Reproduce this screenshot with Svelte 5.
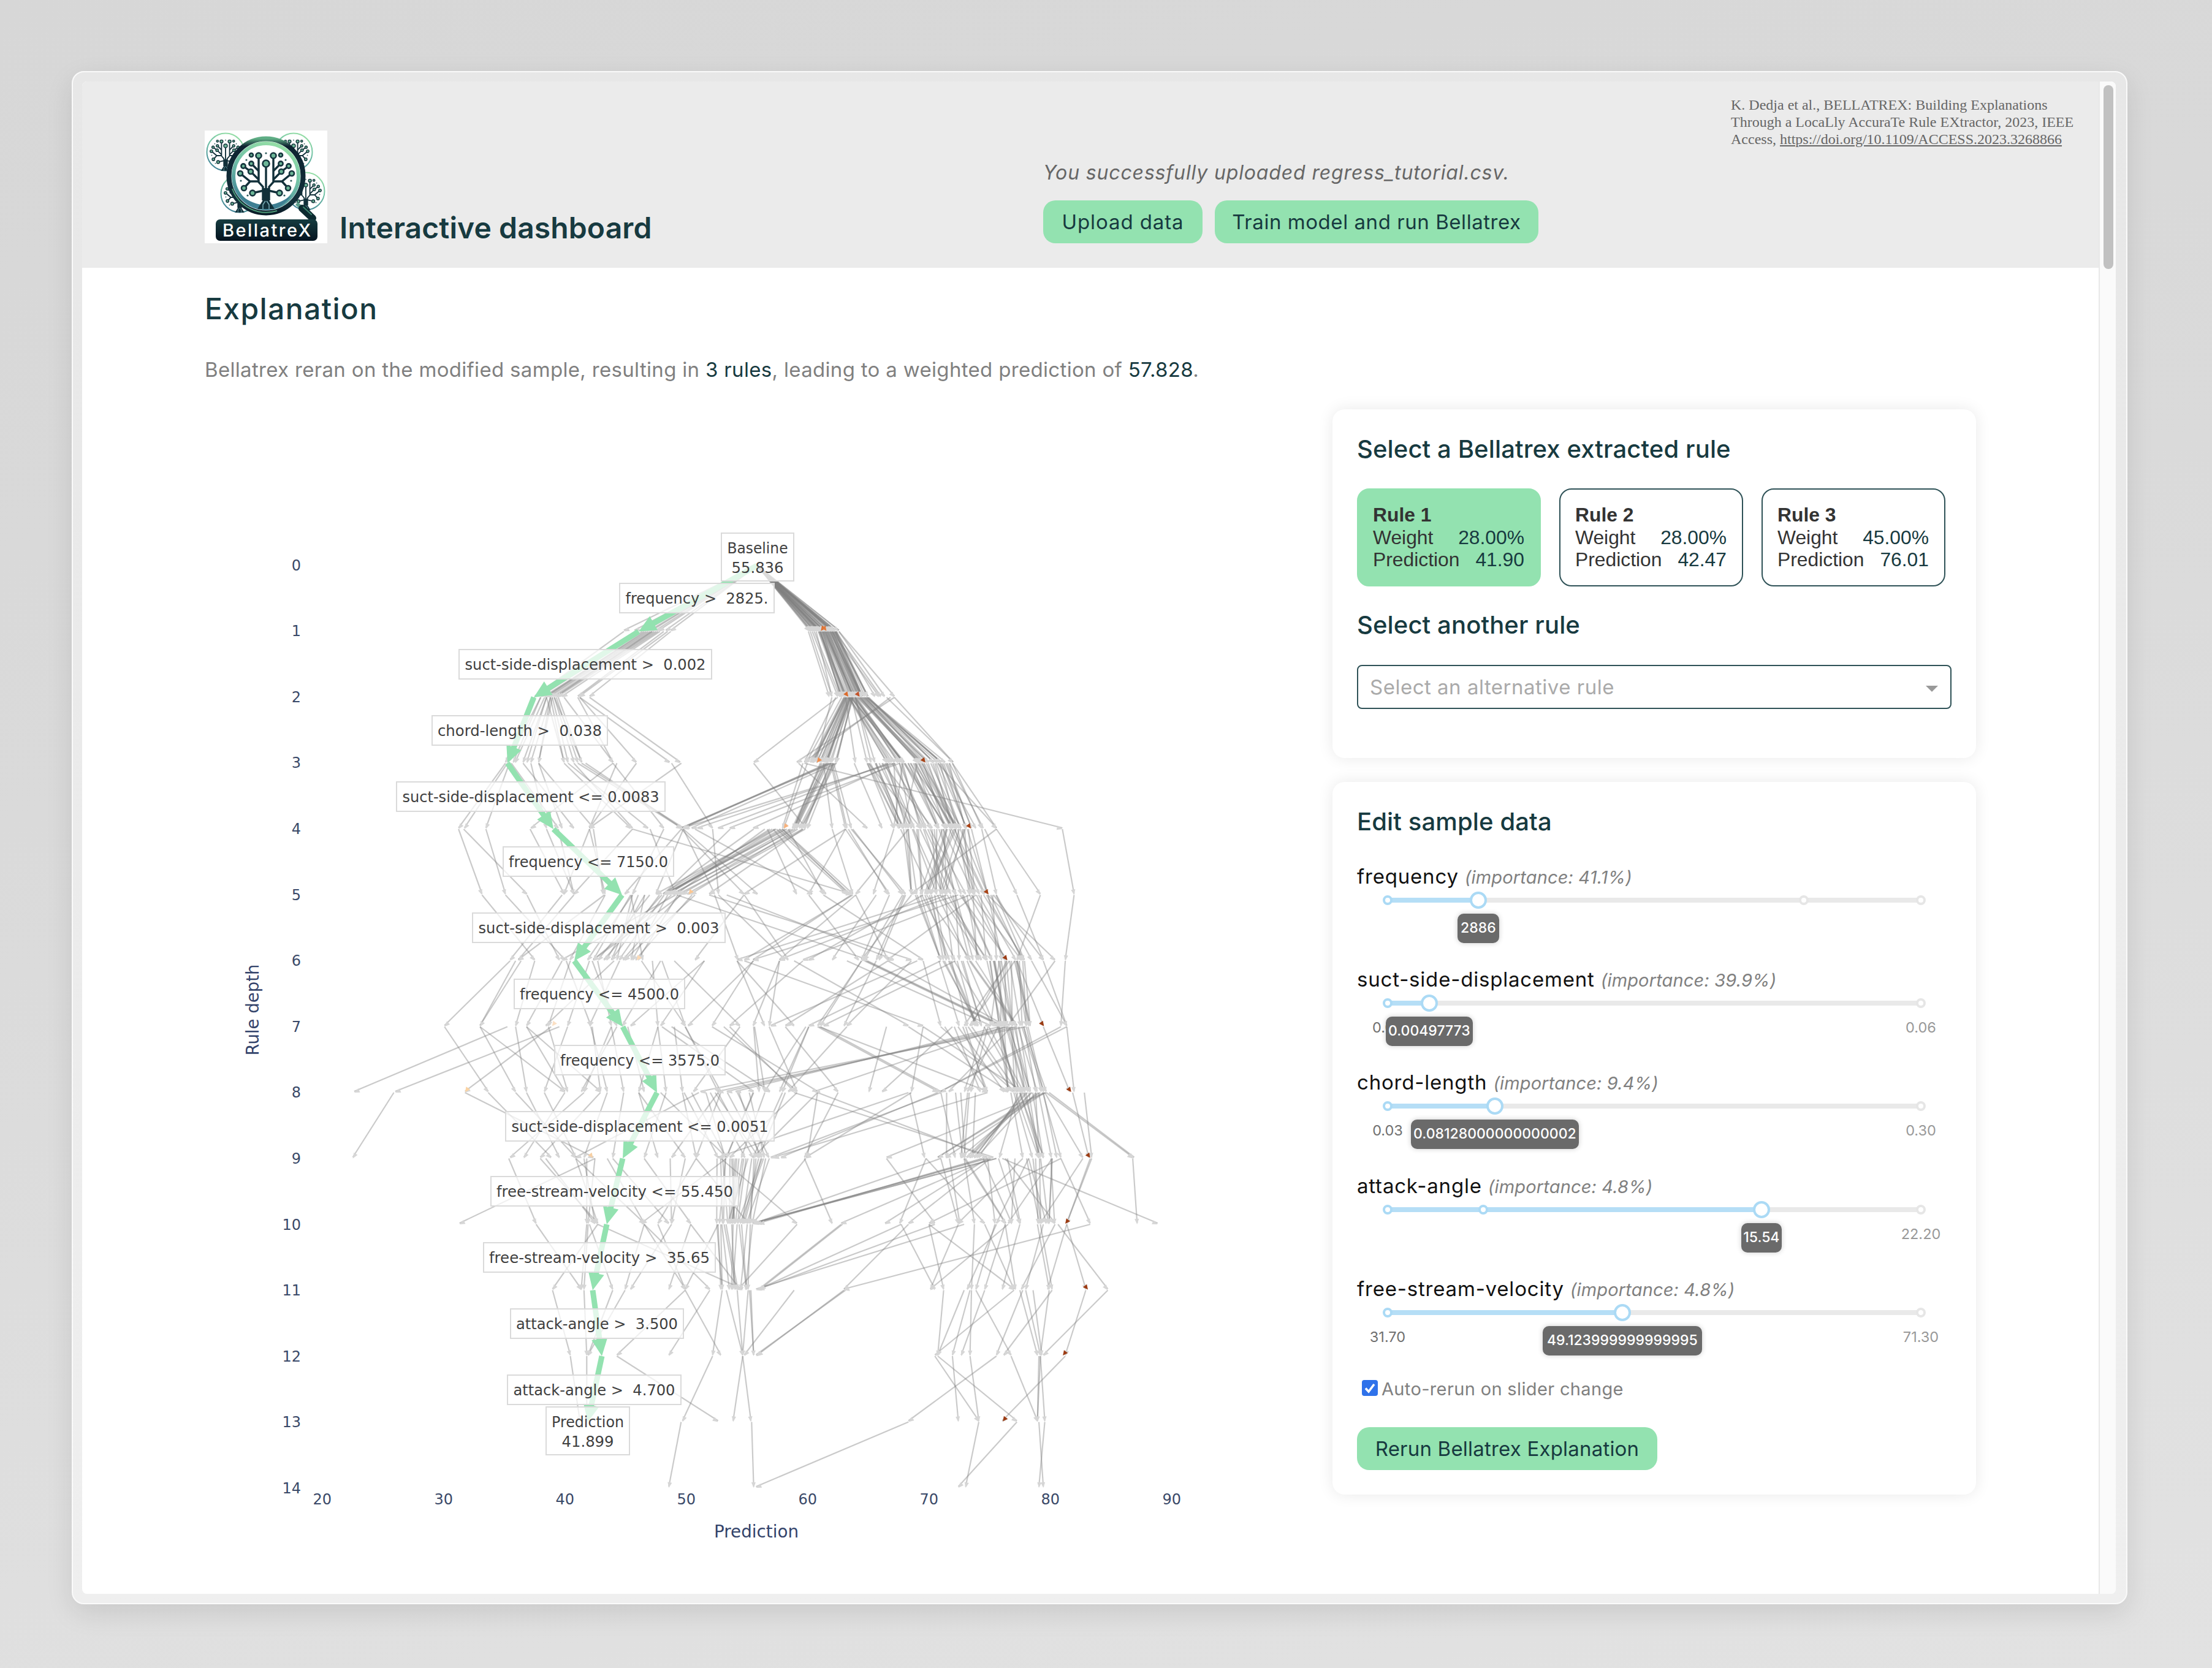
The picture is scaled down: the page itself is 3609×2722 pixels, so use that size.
<script>
  const rules = [
    { name: 'Rule 1', weight: '28.00%', prediction: '41.90', active: true },
    { name: 'Rule 2', weight: '28.00%', prediction: '42.47', active: false },
    { name: 'Rule 3', weight: '45.00%', prediction: '76.01', active: false }
  ];

  // pos and dots are percentages along the rail
  const sliders = [
    { name: 'frequency', imp: '41.1%', pos: 17, value: '2886', w: 68, min: '', max: '', dots: [0, 78, 100] },
    { name: 'suct-side-displacement', imp: '39.9%', pos: 7.8, value: '0.00497773', w: 142, min: '0.00', max: '0.06', dots: [0, 100] },
    { name: 'chord-length', imp: '9.4%', pos: 20.1, value: '0.08128000000000002', w: 274, min: '0.03', max: '0.30', dots: [0, 100] },
    { name: 'attack-angle', imp: '4.8%', pos: 70.1, value: '15.54', w: 66, min: '', max: '22.20', dots: [0, 17.9, 100] },
    { name: 'free-stream-velocity', imp: '4.8%', pos: 44, value: '49.123999999999995', w: 260, min: '31.70', max: '71.30', dots: [0, 100] }
  ];

  // ---- chart geometry ----
  const depthY = (d) => 923 + 107.5 * d;
  const predX = (p) => 129.7 + 19.8 * p;
  const xTicks = [20, 30, 40, 50, 60, 70, 80, 90];
  const yTicks = Array.from({ length: 15 }, (_, i) => i);

  const scales = {
    a: (v) => 560 + v * 0.6378,
    b: (v) => 560 + v * 0.4464,
    c: (v) => 1200 + v * 0.4783
  };

  // start depth, scale, then "from to" pairs
  const traced = [
    [0, 'a', '1059 718 1059 745 1059 765 1059 775 1059 785 1059 790 1059 800 1059 808 1059 825 1059 838'],
    [1, 'a', '718 490 765 505 775 515 780 520 785 525 790 530 795 538 800 545 805 550 810 560 820 600 830 605 838 630 770 520 790 545'],
    [1, 'a', '1190 1243 1195 1250 1200 1265 1205 1270 1250 1370 1268 1410 1268 1385 1262 1360 1258 1375 1210 1250'],
    [2, 'a', '490 415 505 420 505 435 515 440 520 460 520 470 530 480 530 500 535 500 520 565 530 565 535 575 540 590 545 600 550 610 565 690 540 610 600 690 605 750 605 835 630 862'],
    [2, 'a', '1265 1050 1260 1180 1410 1160 1275 1185 1400 1180 1250 1210 1285 1310 1300 1340 1310 1350 1310 1360 1390 1560 1410 1560 1340 1540'],
    [3, 'a', '415 295 420 310 425 365 460 590 500 640 500 560 480 520 565 735 575 780 590 740 600 865 610 870 620 865 690 820 690 480 750 630 700 630 865 630 840 945 430 550'],
    [3, 'c', '62 240 320 -185 325 -180 330 -185 315 -175 345 -150 540 -178 530 -130 520 -60 235 1115 230 160 245 165 325 375 330 380 335 395 215 450 405 500 300 330 450 540 455 560 460 575 480 570 490 600 500 590 510 600 540 555 560 600 570 630 570 540 620 570 740 840 740 890 690 890 730 845 700 820 560 -20 545 60'],
    [4, 'a', '295 355 308 470 365 415 478 565 520 590 550 590 630 565 630 670 640 665 740 590 785 850 820 740 865 720 870 950 870 1060 900 1200 870 800 945 960 990 820 1050 820 865 1025 740 1300 1100 1235 1085 1160'],
    [4, 'c', '140 380 150 390 160 400 160 385 180 300 375 250 375 525 385 520 395 580 400 570 540 470 375 30 590 410 890 1040 850 960 890 600 1115 1155 840 890 805 860 330 400 230 -90 100 -200'],
    [5, 'a', '355 490 415 567 470 553 560 427 590 448 668 448 670 580 735 640 740 700 850 560 865 640 960 1130 1025 900 950 1010 830 740 900 720'],
    [5, 'c', '400 30 410 150 395 60 410 520 480 330 525 430 575 480 580 490 570 440 960 1050 1040 960 860 1090 890 1010 1155 1125 720 150 760 60 800 230 250 420 300 640 30 180 -90 600 -200 450 600 430 880 1050 700 5 820 520 -30 540 640 250'],
    [6, 'b', '610 370 630 500 650 500 700 630 800 670 830 750 900 820 815 905 930 980 910 1000 1010 900 1165 1250 1090 1250 1130 1150 990 740 1320 1050 1210 1450 1320 1160 1440 1540 1500 1260 1160 1020'],
    [6, 'c', '150 60 150 115 430 280 430 290 440 900 445 905 450 910 480 370 520 170 520 920 1125 1110 1090 930 1010 1130 1050 1130 960 1000 200 590 30 640 380 870 640 700 60 -80 5 200 700 250 750 300 230 -20 600 380 960 1050 620 120'],
    [7, 'b', '370 530 500 630 500 810 600 40 790 190 760 445 630 670 670 940 670 810 750 820 820 735 905 965 910 940 980 880 1000 870 980 1025 1150 1080 1150 1180 1210 1240 1250 1380 1165 1500 1200 1560 1450 1280 1500 1520 1250 1370 1040 1100'],
    [7, 'c', '65 100 115 210 280 690 290 700 285 860 250 160 250 150 515 455 640 600 1050 1140 1130 1155 1130 700 930 -30 900 0 960 -60 170 350 -20 200 -40 210 590 930 700 950 380 180 920 270 740 500 240 100 -80 280 1110 700 990 -120 640 980'],
    [8, 'b', '185 35 530 760 445 915 630 850 670 790 735 850 810 660 880 610 940 720 965 880 1025 985 1080 1150 1080 1250 1180 1100 1240 1290 1370 1200 1380 1290 1500 1400 1300 850 1160 1400'],
    [8, 'c', '280 245 350 235 595 645 590 -60 1070 1360 1060 1355 1150 1205 1190 1215 1055 1185 1060 515 280 860 200 880 210 -20 100 20 -60 60 60 -30 600 240 690 155 700 120 860 130 170 80 160 60 280 60'],
    [9, 'b', '605 705 920 425 720 930 890 890 920 895 965 1100 985 1190 1100 1270 1195 1200 1250 1200 850 930 850 1100 880 920 1290 1150 740 920 1290 1480 1400 1090'],
    [9, 'c', '1355 1370 910 1440 1215 1130 1210 1130 1110 1210 1185 1040 515 680 860 60 850 70 840 80 890 60 700 65 860 510 650 560 870 590 980 760 1000 890 235 330 240 60 780 815 -50 210 650 850 780 920 730 765 860 885 1080 930 920 1090 890 60 870 360 1000 1060 1110 660'],
    [10, 'b', '705 870 890 870 895 880 930 765 900 985 1100 1030 1100 1340 1270 1450 930 1460 1150 1250 1200 1050 1270 1190 1100 1250 1370 1250 1370 1380 1380 1385'],
    [10, 'c', '360 80 365 85 565 80 680 80 565 680 590 370 1210 370 660 710 660 950 850 950 920 955 815 805 920 850 930 665 1030 1070 1040 1080 1050 990 1090 975 1130 1195 1100 1270 210 10 885 820 760 665 970 910 890 790 1130 1065 780 70'],
    [11, 'b', '765 830 880 890 985 895 1030 895 1250 1000 1250 1380 1340 1190 1385 1350 1440 1460 1480 1460 1490 1500 1400 1460 1485 1500'],
    [11, 'c', '710 690 1270 1050 1195 1125 1080 915 800 740 850 770 805 800 950 680 990 1040 970 1030 1015 1045 820 940 980 890 1070 1040 375 70 370 75 200 30 780 690'],
    [12, 'b', '830 865 890 890 1000 1370 1350 1240 1460 1425 1460 1490'],
    [12, 'c', '1125 910 890 590 690 960 680 830 740 760 800 830 940 1030 1040 1030 1040 1055 1035 1030'],
    [13, 'c', '960 760 830 785 1055 1035 1035 1050 590 70 55 62'],
    [13, 'b', '1235 1190']
  ];

  // dense bundles: start depth, scale, from range, to range, number of edges
  const bundles = [
    [0, 'a', 1059, 1059, 1192, 1268, 46],
    [1, 'a', 1215, 1262, 1272, 1342, 44],
    [2, 'a', 1280, 1305, 1195, 1262, 22],
    [2, 'a', 1290, 1345, 1390, 1530, 34],
    [3, 'c', 285, 345, 185, 245, 14],
    [3, 'c', 570, 730, 690, 805, 26],
    [3, 'c', 440, 640, 560, 770, 16],
    [4, 'c', 110, 240, -270, -150, 14],
    [4, 'c', 560, 800, 600, 860, 32],
    [4, 'c', 700, 790, 620, 720, 9],
    [5, 'c', 610, 890, 700, 985, 34],
    [5, 'a', 720, 900, 625, 760, 9],
    [5, 'a', 850, 720, 640, 780, 4],
    [6, 'c', 690, 820, 740, 960, 14],
    [6, 'c', 860, 990, 900, 1005, 17],
    [6, 'c', 960, 850, 780, 980, 7],
    [7, 'c', 890, 1000, 930, 1060, 20],
    [7, 'c', 700, 900, 800, 1000, 8],
    [7, 'c', 960, 740, 720, 880, 6],
    [8, 'c', 930, 1060, 980, 1110, 13],
    [8, 'c', 1060, 960, 690, 900, 12],
    [8, 'c', 700, 830, 720, 830, 7],
    [8, 'b', 1240, 1500, 1370, 1580, 9],
    [9, 'b', 1365, 1560, 1365, 1500, 24],
    [9, 'c', 700, 1100, 760, 1090, 8],
    [9, 'c', 980, 1100, 1030, 1090, 6],
    [10, 'b', 1365, 1500, 1385, 1510, 12]
  ];

  // small deterministic generator so the bundles always fall the same way
  let seed = 7;
  const rnd = () => ((seed = (seed * 16807) % 2147483647) / 2147483647);

  const edges = [];
  for (const [d, s, text] of traced) {
    const v = text.split(' ').map(Number);
    for (let i = 0; i < v.length; i += 2) edges.push({ d, x0: scales[s](v[i]), x1: scales[s](v[i + 1]) });
  }
  for (const [d, s, a0, a1, b0, b1, n] of bundles) {
    const jitter = d < 3 ? 0.35 : 0.6;
    for (let i = 0; i < n; i++) {
      const t = (i + rnd()) / n;
      const u = Math.min(1, Math.max(0, t + (rnd() - 0.5) * jitter));
      edges.push({ d, x0: scales[s](a0 + (a1 - a0) * t), x1: scales[s](b0 + (b1 - b0) * u) });
    }
  }

  function head(x0, y0, x1, y1, len, half) {
    const l = Math.hypot(x1 - x0, y1 - y0);
    const ux = (x1 - x0) / l;
    const uy = (y1 - y0) / l;
    const bx = x1 - ux * len;
    const by = y1 - uy * len;
    return `M${x1.toFixed(1)} ${y1.toFixed(1)}L${(bx - uy * half).toFixed(1)} ${(by + ux * half).toFixed(1)}L${(bx + uy * half).toFixed(1)} ${(by - ux * half).toFixed(1)}Z`;
  }
  const heads = edges.map((e) => head(e.x0, depthY(e.d), e.x1, depthY(e.d + 1), 9, 3.6)).join('');

  const mainPath = [1235, 1042, 871, 828, 903, 1015, 937, 1016, 1072, 1016, 990, 967, 982, 959];
  const mainSegs = mainPath.slice(1).map((x1, i) => {
    const x0 = mainPath[i];
    const y0 = depthY(i);
    const y1 = depthY(i + 1);
    const l = Math.hypot(x1 - x0, y1 - y0);
    return { x0, y0, x1: x1 - ((x1 - x0) / l) * 18, y1: y1 - ((y1 - y0) / l) * 18, head: head(x0, y0, x1, y1, 28, 13) };
  });

  const flames = [
    [1, 'a', 1225, '#dd6b2b', -1], [1, 'a', 1233, '#e27a3c', 1], [2, 'a', 1289, '#dd6b2b', 1], [2, 'a', 1318, '#c4532a', 1],
    [3, 'a', 1215, '#f08f4f', -1], [3, 'a', 1486, '#a84316', 1], [4, 'a', 1130, '#f8b27c', -1], [4, 'c', 799, '#a84316', 1],
    [5, 'a', 887, '#fbc793', -1], [5, 'c', 859, '#a84316', 1], [6, 'b', 1077, '#fcd9b4', -1], [6, 'c', 923, '#9c3c14', 1],
    [7, 'c', 1048, '#9c3c14', 1], [7, 'b', 768, '#fce0c4', -1], [8, 'c', 1141, '#9c3c14', 1], [8, 'b', 450, '#fbd3a2', -1],
    [9, 'c', 1206, '#9c3c14', 1], [9, 'b', 908, '#f6cfa4', 1], [10, 'c', 1129, '#9c3c14', -1], [11, 'c', 1198, '#9c3c14', 1],
    [12, 'c', 1121, '#9c3c14', -1], [13, 'c', 916, '#9c3c14', -1]
  ].map(([d, s, v, color, dir]) => {
    const x = scales[s](v);
    const y = depthY(d) - 1;
    return { color, path: head(x - dir * 5, y - 9, x + dir * 2, y, 8, 4) };
  });

  // x, y, width, height, lines of text with their widths
  const labels = [
    { x: 1177, y: 870, w: 118, h: 78, lines: [['Baseline', 99], ['55.836', 85]] },
    { x: 1011, y: 952, w: 252, h: 48, lines: [['frequency >  2825.', 233]] },
    { x: 749, y: 1060, w: 412, h: 48, lines: [['suct-side-displacement >  0.002', 393]] },
    { x: 705, y: 1168, w: 286, h: 48, lines: [['chord-length >  0.038', 268]] },
    { x: 647, y: 1276, w: 438, h: 48, lines: [['suct-side-displacement <= 0.0083', 419]] },
    { x: 821, y: 1382, w: 278, h: 48, lines: [['frequency <= 7150.0', 260]] },
    { x: 771, y: 1490, w: 412, h: 48, lines: [['suct-side-displacement >  0.003', 393]] },
    { x: 839, y: 1598, w: 278, h: 48, lines: [['frequency <= 4500.0', 260]] },
    { x: 905, y: 1706, w: 278, h: 48, lines: [['frequency <= 3575.0', 260]] },
    { x: 825, y: 1814, w: 438, h: 48, lines: [['suct-side-displacement <= 0.0051', 419]] },
    { x: 801, y: 1920, w: 404, h: 48, lines: [['free-stream-velocity <= 55.450', 386]] },
    { x: 789, y: 2028, w: 378, h: 48, lines: [['free-stream-velocity >  35.65', 360]] },
    { x: 833, y: 2136, w: 282, h: 48, lines: [['attack-angle >  3.500', 264]] },
    { x: 828, y: 2244, w: 283, h: 48, lines: [['attack-angle >  4.700', 264]] },
    { x: 891, y: 2296, w: 136, h: 78, lines: [['Prediction', 118], ['41.899', 85]] }
  ];

  // circuit tree in the logo, relative to the centre of its lens
  const twigs = [
    'M0 50V-19', 'M-5 40V18L-12 10V-30', 'M5 40V18L12 10V-30', 'M-12 9H-26L-42 -4', 'M12 9H26L42 -4',
    'M-26 9L-36 20', 'M26 9L36 20', 'M-12 6L-25 -7L-37 -16', 'M12 6L25 -7L37 -16', 'M-12 -8L-24 -20', 'M12 -8L24 -20',
    'M-4 24L-22 28', 'M4 24L22 28'
  ];
  const buds = [
    [0, -20, 5.5], [-12, -33, 4.5], [12, -33, 4.5], [-24, -34, 3], [24, -34, 3], [-24, -20, 3.6], [24, -20, 3.6],
    [-37, -16, 3.6], [37, -16, 3.6], [-25, -7, 4], [25, -7, 4], [-42, -4, 4], [42, -4, 4], [-36, 20, 4], [36, 20, 4], [-22, 28, 4.4], [22, 28, 4.4]
  ];
  const specks = [[0, -37], [-32, -26], [32, -26], [-41, 8], [41, 8], [-30, 32], [30, 32]];
</script>

{#snippet tree()}
  {#each twigs as d}<path class="twig" {d} />{/each}
  {#each buds as [cx, cy, r]}<circle class="bud" {cx} {cy} {r} />{/each}
  {#each specks as [cx, cy]}<circle class="speck" {cx} {cy} r="1.6" />{/each}
  <path class="root" d="M-14 54L-4 38V20H4V38L14 54Z" />
  <path class="rootline" d="M-5 54V47L-1 41M5 54V47L1 41" />
{/snippet}

<div class="desk">
  <div class="frame">
    <div class="window">
      <div class="page">
        <header>
          <div class="brand">
            <svg class="logo" viewBox="0 0 200 184">
              <defs>
                <linearGradient id="ring" x1="0.7" y1="0" x2="0.3" y2="1">
                  <stop offset="0" stop-color="#96dfa6" /><stop offset="0.45" stop-color="#6fbfa6" /><stop offset="1" stop-color="#3d7f95" />
                </linearGradient>
                <linearGradient id="rim" x1="0" y1="0" x2="0" y2="1">
                  <stop offset="0" stop-color="#5fae85" /><stop offset="0.1" stop-color="#0d2230" /><stop offset="0.85" stop-color="#12303a" /><stop offset="1" stop-color="#0a1c28" />
                </linearGradient>
                <linearGradient id="plate" x1="0" y1="0" x2="0" y2="1">
                  <stop offset="0" stop-color="#163c40" /><stop offset="1" stop-color="#04131f" />
                </linearGradient>
              </defs>
              <rect width="200" height="184" fill="#fff" />
              {#each [[34, 35], [145, 35], [165, 99], [57, 103]] as [x, y]}
                <g transform="translate({x} {y})">
                  <circle r="30.5" fill="#fff" stroke="url(#ring)" stroke-width="2" />
                  <g transform="translate(0 1) scale(0.55)">{@render tree()}</g>
                </g>
              {/each}
              <path d="M150 119L162 130" stroke="#5c9d8a" stroke-width="6" />
              <path d="M159 127L176 143" stroke="#0c2a30" stroke-width="12" stroke-linecap="round" />
              <path d="M161 125L174 137" stroke="#3f8570" stroke-width="2" stroke-linecap="round" />
              <circle cx="100" cy="74" r="60.5" fill="#fff" stroke="url(#rim)" stroke-width="8" />
              <path d="M45 95A59 59 0 0 0 118 131" fill="none" stroke="#4f9a78" stroke-width="2" />
              <circle cx="100" cy="74" r="53" fill="#fff" stroke="url(#ring)" stroke-width="6" />
              <path d="M58 105Q100 138 142 105Q126 129 100 129Q74 129 58 105Z" fill="#3f7f93" />
              <g transform="translate(100 74)">{@render tree()}</g>
              <rect x="18" y="145" width="166" height="35" rx="7" fill="url(#plate)" />
              <text class="logotext" x="101" y="173" text-anchor="middle" textLength="144">BellatreX</text>
            </svg>
            <h1>Interactive dashboard</h1>
          </div>
          <div class="actions">
            <p class="status">You successfully uploaded regress_tutorial.csv.</p>
            <div class="buttons">
              <button class="btn upload">Upload data</button>
              <button class="btn train">Train model and run Bellatrex</button>
            </div>
          </div>
          <p class="cite">
            K. Dedja et al., BELLATREX: Building Explanations<br />Through a LocaLly AccuraTe Rule EXtractor, 2023, IEEE<br />Access,
            <u>https://doi.org/10.1109/ACCESS.2023.3268866</u>
          </p>
        </header>

        <main>
          <h2>Explanation</h2>
          <p class="summary">Bellatrex reran on the modified sample, resulting in <b>3 rules</b>, leading to a weighted prediction of <b>57.828</b>.</p>
          <div class="content">
            <svg class="chart" viewBox="334 668 1840 1900">
              <g class="edges">
                {#each edges as e}<line x1={e.x0} y1={depthY(e.d)} x2={e.x1} y2={depthY(e.d + 1) - 2} />{/each}
              </g>
              <path class="heads" d={heads} />
              {#each flames as f}<path d={f.path} fill={f.color} />{/each}
              {#each mainSegs as s}
                <line class="main" x1={s.x0} y1={s.y0} x2={s.x1} y2={s.y1} />
                <path class="mainhead" d={s.head} />
              {/each}
              {#each labels as l}
                <rect class="box" x={l.x} y={l.y} width={l.w} height={l.h} />
                {#each l.lines as [t, w], i}
                  <text class="note" x={l.x + l.w / 2 - w / 2} y={l.y + 33 + i * 31.5} textLength={w} lengthAdjust="spacingAndGlyphs">{t}</text>
                {/each}
              {/each}
              {#each yTicks as t}<text class="tick" x="491" y={930.5 + t * 107.6} text-anchor="end">{t}</text>{/each}
              {#each xTicks as t}<text class="tick" x={predX(t)} y="2455" text-anchor="middle">{t}</text>{/each}
              <text class="axis" x="1234" y="2509" text-anchor="middle" textLength="138" lengthAdjust="spacingAndGlyphs">Prediction</text>
              <text class="axis" transform="translate(422 1648) rotate(-90)" text-anchor="middle" textLength="149" lengthAdjust="spacingAndGlyphs">Rule depth</text>
            </svg>

            <div class="side">
              <section class="card select-card">
                <h3>Select a Bellatrex extracted rule</h3>
                <div class="rules">
                  {#each rules as r}
                    <div class="rule" class:active={r.active}>
                      <b>{r.name}</b>
                      <div class="kv"><span>Weight</span><em>{r.weight}</em></div>
                      <div class="kv"><span>Prediction</span><em>{r.prediction}</em></div>
                    </div>
                  {/each}
                </div>
                <h3>Select another rule</h3>
                <div class="dropdown"><span>Select an alternative rule</span><i></i></div>
              </section>

              <section class="card edit-card">
                <h3 class="edit-title">Edit sample data</h3>
                {#each sliders as s}
                  <div class="row">
                    <div class="label">{s.name} <i>(importance: {s.imp})</i></div>
                    <div class="rail">
                      <div class="fill" style="width: {s.pos}%"></div>
                      {#each s.dots as d}<span class="dot" class:on={d <= s.pos} style="left: {d}%"></span>{/each}
                      {#if s.min}<span class="mark low" style="left: 0%">{s.min}</span>{/if}
                      {#if s.max}<span class="mark" style="left: 100%">{s.max}</span>{/if}
                      <span class="handle" style="left: {s.pos}%"></span>
                      <span class="tip" style="left: {s.pos}%; width: {s.w}px">{s.value}</span>
                    </div>
                  </div>
                {/each}
                <div class="auto">
                  <svg class="check" viewBox="0 0 26 26"><rect width="26" height="26" rx="4" fill="#2f72ea" /><path d="M6 13.5L11 19L20 7" fill="none" stroke="#fff" stroke-width="3.6" /></svg>
                  <span>Auto-rerun on slider change</span>
                </div>
                <button class="btn rerun">Rerun Bellatrex Explanation</button>
              </section>
            </div>
          </div>
        </main>
      </div>
      <div class="scrollbar"><div class="thumb"></div></div>
    </div>
  </div>
</div>

<style>
  :global(body) { margin: 0; }
  * { box-sizing: border-box; }
  h1, h2, h3, p { margin: 0; }
  .desk {
    width: 3609px; height: 2722px; padding: 116px 138px 104px 117px; overflow: hidden;
    background: linear-gradient(170deg, #d7d7d7, #dadada 40%, #e2e2e2);
    font-family: Inter, "Open Sans", sans-serif;
  }
  .frame {
    height: 2502px; padding: 15px 17px 15px 15px; border: 2px solid #fafafa; border-radius: 20px;
    background: linear-gradient(#e7e7e7, #efefef);
    box-shadow: 0 14px 44px rgba(0, 0, 0, 0.1);
  }
  .window { display: flex; height: 2468px; border-radius: 8px; overflow: hidden; background: #fff; }
  .page { flex: 1; }
  .scrollbar { width: 28px; padding: 6px 4px 0 6px; background: #fafafa; border-left: 2px solid #e8e8e8; }
  .thumb { width: 16px; height: 300px; border-radius: 8px; background: #c1c1c1; }

  header {
    display: grid; grid-template-columns: 1368px 1122px 1fr; height: 304px;
    padding: 0 0 40px 200px; background: #ebebeb;
  }
  .brand { display: flex; align-items: flex-end; gap: 20px; align-self: end; }
  .logo { width: 200px; height: 184px; display: block; }
  .logotext { font: 500 29px Inter, sans-serif; fill: #fff; }
  .twig { fill: none; stroke: #12303a; stroke-width: 3.4; }
  .bud { fill: #6cb596; stroke: #16363e; stroke-width: 2.6; }
  .speck { fill: #2c5a5c; }
  .root { fill: #12303a; }
  .rootline { fill: none; stroke: #7fb3bd; stroke-width: 1.4; }
  h1 { font-size: 48px; font-weight: 600; line-height: 50px; letter-spacing: 0.1px; color: #173a40; white-space: nowrap; }
  .actions { align-self: end; }
  .status { font-size: 32px; line-height: 40px; letter-spacing: 0.85px; font-style: italic; color: #666; margin-bottom: 25px; white-space: nowrap; }
  .buttons { display: flex; gap: 20px; }
  .btn {
    height: 70px; border: 0; padding: 0; border-radius: 20px; background: #93e2b0; color: #173a40;
    font: 400 33px Inter, sans-serif; white-space: nowrap;
  }
  .upload { width: 260px; letter-spacing: 0.9px; }
  .train { width: 528px; letter-spacing: 0.55px; }
  .cite { font: 24px/28px "Liberation Serif", serif; color: #666; padding-top: 24px; white-space: nowrap; }
  .cite u { text-underline-offset: 2px; }

  main { padding: 37px 0 0 200px; }
  h2 { font-size: 48px; font-weight: 500; line-height: 60px; letter-spacing: 1.4px; color: #173a40; }
  .summary { margin-top: 49px; font-size: 33px; line-height: 40px; letter-spacing: 0.32px; color: #808080; white-space: nowrap; }
  .summary b { font-weight: 400; color: #173a40; }
  .content { display: flex; margin-top: 45px; }
  .chart { width: 1840px; height: 1900px; flex: none; }
  .edges line { stroke: #808080; stroke-opacity: 0.42; stroke-width: 2.2; }
  .heads { fill: #d6d6d6; }
  .main { stroke: #93e2b0; stroke-width: 9; }
  .mainhead { fill: #93e2b0; }
  .box { fill: rgba(255, 255, 255, 0.72); stroke: #dadada; stroke-width: 2; }
  .note { font: 24.3px "DejaVu Sans", Verdana, sans-serif; fill: #404040; white-space: pre; }
  .tick { font: 24px "DejaVu Sans", Verdana, sans-serif; fill: #3a4968; }
  .axis { font: 27.5px "DejaVu Sans", Verdana, sans-serif; fill: #33436a; }

  .side { width: 1050px; display: flex; flex-direction: column; gap: 39px; }
  .card { border-radius: 20px; background: #fff; padding: 41px 40px; box-shadow: 0 0 26px rgba(0, 0, 0, 0.09); }
  .select-card { height: 569px; }
  .edit-card { height: 1163px; }
  h3 { font-size: 40px; font-weight: 500; line-height: 48px; letter-spacing: 0.12px; color: #173a40; white-space: nowrap; }
  .rules { display: flex; gap: 30px; margin: 40px 0 39px; }
  .rule {
    width: 300px; height: 160px; padding: 23px 25px 0 24px; border: 2px solid #2f5257; border-radius: 20px;
    font: 31.8px/36.5px "Liberation Sans", Arial, sans-serif; color: #333;
  }
  .rule.active { background: #93e2b0; border-color: #93e2b0; }
  .rule b { display: block; }
  .kv { display: flex; justify-content: space-between; }
  .kv em { font-style: normal; color: #173a40; }
  .dropdown {
    display: flex; align-items: center; justify-content: space-between; width: 970px; height: 72px; margin-top: 41px;
    padding: 0 20px 0 19px; border: 2px solid #2f5257; border-radius: 8px; font-size: 33px; letter-spacing: 0.5px; color: #aaa;
  }
  .dropdown i { margin-top: 6px; border: 10px solid transparent; border-top-color: #999; border-bottom-width: 0; }
  .edit-title { margin-bottom: 44px; }

  .row { height: 168.2px; }
  .label { font-size: 33px; line-height: 42px; letter-spacing: 0.8px; color: #111; white-space: nowrap; }
  .label i { font-size: 29px; letter-spacing: 0.15px; color: #808080; }
  .rail { position: relative; width: 870px; height: 8px; margin: 12px 0 0 50px; border-radius: 4px; background: #e9e9e9; }
  .fill { height: 8px; border-radius: 4px; background: #b5def6; }
  .dot, .handle, .mark, .tip { position: absolute; transform: translateX(-50%); }
  .dot { top: -4px; width: 16px; height: 16px; border: 4px solid #e6e6e6; border-radius: 50%; background: #fff; }
  .dot.on { border-color: #abdaf5; }
  .handle { top: -10px; width: 28px; height: 28px; border: 4px solid #abdaf5; border-radius: 50%; background: #fff; }
  .mark { top: 28px; font-size: 23.5px; line-height: 32px; color: #999; }
  .mark.low { color: #707070; }
  .tip {
    top: 26px; height: 48px; border-radius: 10px; background: #6a6a6a; color: #fff; text-align: center;
    font-size: 23px; line-height: 47px; font-weight: 500; white-space: nowrap; box-shadow: 0 0 8px rgba(0, 0, 0, 0.2);
  }
  .auto { display: flex; align-items: center; gap: 6px; height: 34px; padding-left: 8px; font-size: 29px; letter-spacing: 0.35px; color: #808080; }
  .check { width: 26px; height: 26px; margin-bottom: 4px; }
  .rerun { width: 490px; margin-top: 45px; letter-spacing: 0.2px; }
</style>
